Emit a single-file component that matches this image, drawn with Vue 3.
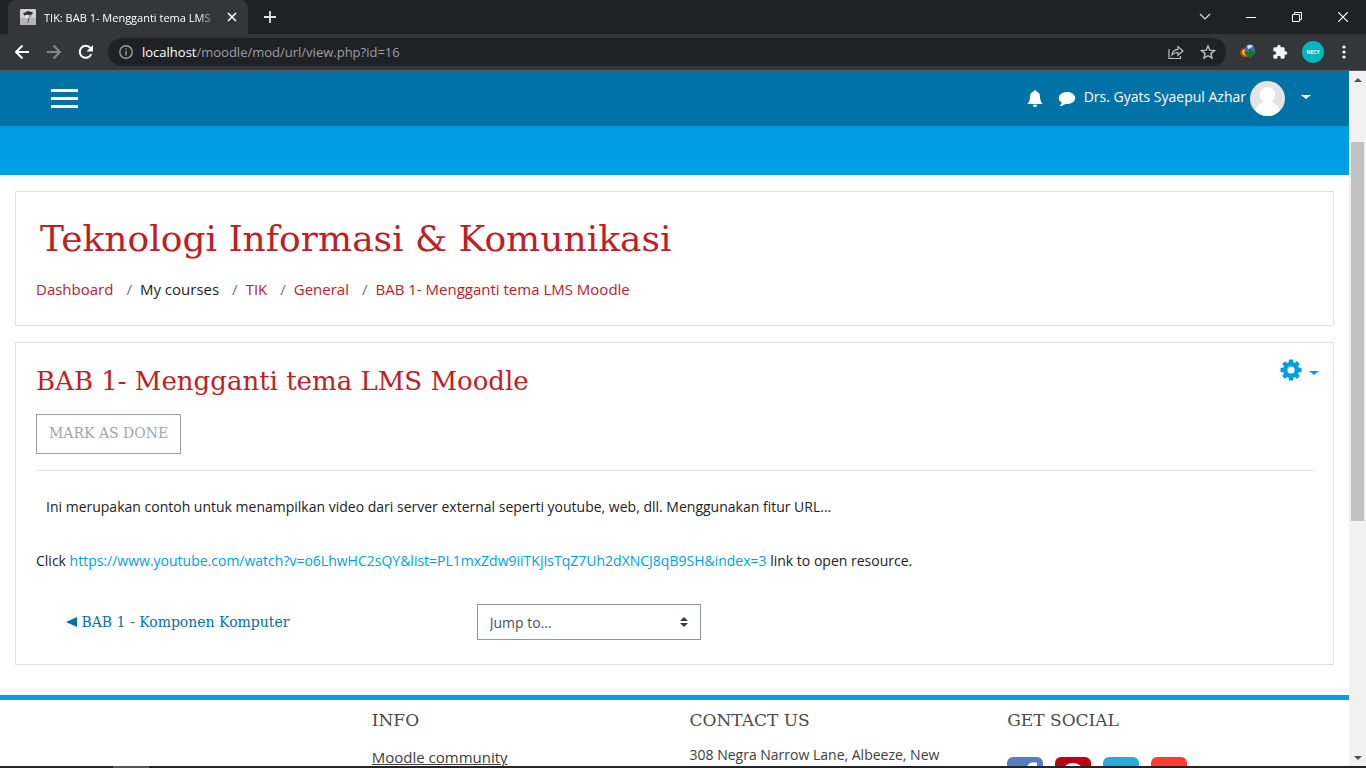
<template>
  <div class="window">
    <div class="tabstrip">
      <div class="tab">
        <svg class="tab__favicon" viewBox="0 0 16 16" aria-hidden="true">
          <rect width="16" height="16" rx="1" fill="#cfcfcf" />
          <rect y="9" width="16" height="7" fill="#b4b4b4" />
          <path d="M3 4.5 8 2l5 1.5-1 2-3 .5-2-.5-2 1.5z" fill="#303030" />
          <path d="M10 5.500c1 3-1 3-1.500 4.500L8 14" fill="none" stroke="#555" />
          <path d="M6 6c0 2 1 2 2 3" fill="none" stroke="#f4f4f4" stroke-width="1.500" />
        </svg>
        <span class="tab__title">TIK: BAB 1- Mengganti tema LMS</span>
        <button type="button" class="icon-btn tab__close" aria-label="Close tab">
          <svg width="10" height="10" viewBox="0 0 10 10"><path d="M1 1l8 8M9 1 1 9" stroke="#fff" stroke-width="1.6" /></svg>
        </button>
      </div>
      <button type="button" class="icon-btn tabstrip__new" aria-label="New tab">
        <svg width="12" height="12" viewBox="0 0 12 12"><path d="M6 0v12M0 6h12" stroke="#dfe1e5" stroke-width="1.8" /></svg>
      </button>
      <div class="caption">
        <button type="button" class="icon-btn caption__btn" aria-label="Search tabs">
          <svg width="12" height="12" viewBox="0 0 12 12"><path d="M1 3l5 5 5-5" fill="none" stroke="#dfe1e5" stroke-width="1.2" /></svg>
        </button>
        <button type="button" class="icon-btn caption__btn" aria-label="Minimize">
          <svg width="10" height="10" viewBox="0 0 10 10"><path d="M0 5.500h10" stroke="#fff" /></svg>
        </button>
        <button type="button" class="icon-btn caption__btn" aria-label="Restore">
          <svg width="10" height="10" viewBox="0 0 10 10" fill="none" stroke="#fff">
            <path d="M.5 2.500h7v7h-7zM2.500 2.500v-2h7v7h-2" />
          </svg>
        </button>
        <button type="button" class="icon-btn caption__btn" aria-label="Close">
          <svg width="10" height="10" viewBox="0 0 10 10"><path d="M0 0l10 10M10 0 0 10" stroke="#fff" stroke-width="1.200" /></svg>
        </button>
      </div>
    </div>

    <div class="toolbar">
      <button type="button" class="icon-btn toolbar__nav" aria-label="Back">
        <svg width="16" height="16" viewBox="0 0 16 16" fill="none" stroke="#fff" stroke-width="2"><path d="M15 8H2M8.500 1.500 2 8l6.500 6.500" /></svg>
      </button>
      <button type="button" class="icon-btn toolbar__nav" aria-label="Forward">
        <svg width="16" height="16" viewBox="0 0 16 16" fill="none" stroke="#84868a" stroke-width="2"><path d="M1 8h13M7.500 1.500 14 8l-6.500 6.500" /></svg>
      </button>
      <button type="button" class="icon-btn toolbar__nav" aria-label="Reload">
        <svg width="16" height="16" viewBox="0 0 16 16">
          <path d="M13.300 10.200A6 6 0 1 1 12.400 4" fill="none" stroke="#fff" stroke-width="2" />
          <path d="M15 1v6.500H8.500z" fill="#fff" />
        </svg>
      </button>
      <div class="omnibox">
        <svg class="omnibox__info" width="14" height="14" viewBox="0 0 14 14" fill="none" stroke="#9aa0a6" stroke-width="1.400">
          <circle cx="7" cy="7" r="6.200" /><path d="M7 6v4.500M7 3.300v1.500" />
        </svg>
        <span class="omnibox__url"><b>localhost</b>/moodle/mod/url/view.php?id=16</span>
        <button type="button" class="icon-btn" aria-label="Share">
          <svg width="16" height="16" viewBox="0 0 16 16" fill="none" stroke="#bdc1c6" stroke-width="1.200">
            <path d="M1 5v9.500h11.500V12M4 11c.3-4 2.500-5.500 6-5.700V2.500L15 7l-5 4.300V8.500C7 8.500 5.300 9.300 4 11z" />
          </svg>
        </button>
        <button type="button" class="icon-btn" aria-label="Bookmark this tab">
          <svg width="16" height="16" viewBox="0 0 16 16" fill="none" stroke="#bdc1c6" stroke-width="1.400">
            <path d="m8 2 1.800 4.200 4.600.4-3.500 3 1.100 4.500L8 11.700l-4 2.400 1.100-4.500-3.500-3 4.600-.4z" />
          </svg>
        </button>
      </div>
      <button type="button" class="icon-btn toolbar__ext" aria-label="Download manager">
        <svg width="18" height="16" viewBox="0 0 18 16">
          <circle cx="11" cy="6" r="5.200" fill="#3f6ea8" />
          <path d="M8 2c2-2 5-1 6 0l-2 2-3 1z" fill="#c9dcf5" />
          <path d="M6 4C2 4 0 8 2 11s6 3 8 1c-4 0-6-3-4-8z" fill="#db3327" />
          <path d="M6 5c-3 1-4 4-1 6l4 1C6 10 5 8 6 5z" fill="#f7d133" />
          <path d="M5 8h5V5l7 4-7 6v-3c-2 0-4-1-5-4z" fill="#127a18" />
        </svg>
      </button>
      <button type="button" class="icon-btn toolbar__ext" aria-label="Extensions">
        <svg width="16" height="16" viewBox="0 0 24 24" fill="#f1f3f4">
          <path d="M20.500 11H19V7c0-1.100-.9-2-2-2h-4V3.500a2.500 2.500 0 0 0-5 0V5H4c-1.100 0-2 .9-2 2v3.800h1.500a2.700 2.700 0 0 1 0 5.400H2V20c0 1.100.9 2 2 2h3.800v-1.500a2.700 2.700 0 0 1 5.400 0V22H17c1.100 0 2-.9 2-2v-4h1.500a2.500 2.500 0 0 0 0-5z" />
        </svg>
      </button>
      <button type="button" class="toolbar__profile" aria-label="Profile">
        <span>NECY</span>
      </button>
      <button type="button" class="icon-btn toolbar__menu" aria-label="Menu">
        <svg width="4" height="14" viewBox="0 0 4 14" fill="#fff"><circle cx="2" cy="2" r="1.600" /><circle cx="2" cy="7" r="1.600" /><circle cx="2" cy="12" r="1.600" /></svg>
      </button>
    </div>

    <div class="viewport">
      <div class="page">
        <header class="navbar">
          <button type="button" class="navbar__toggle" aria-label="Side panel">
            <i></i><i></i><i></i>
          </button>
          <div class="navbar__user">
            <button type="button" class="icon-btn" aria-label="Notifications">
              <svg width="16" height="18" viewBox="0 0 16 18" fill="#fff">
                <path d="M8 0c.7 0 1 .5 1 1.200 2.500.6 4 2.600 4 5.300 0 4 1 5.800 2.800 7.500H.2C2 12.300 3 10.500 3 6.500c0-2.700 1.500-4.700 4-5.300C7 .5 7.300 0 8 0zM5.800 14.800h4.400a2.200 2.200 0 0 1-4.400 0z" />
              </svg>
            </button>
            <button type="button" class="icon-btn navbar__messages" aria-label="Messages">
              <svg width="18" height="16" viewBox="0 0 18 16" fill="#fff">
                <path d="M9 1c4.600 0 8.200 2.600 8.200 6s-3.600 6-8.200 6l-1.700-.1c-1.600 1.300-3.400 2-5.800 2.100 1-.9 1.900-1.900 2.200-3.400C1.900 10.500.8 8.900.8 7 .8 3.600 4.400 1 9 1z" />
              </svg>
            </button>
            <a href="#" class="navbar__name">Drs. Gyats Syaepul Azhar</a>
            <svg class="navbar__avatar" width="35" height="35" viewBox="0 0 35 35" aria-hidden="true">
              <defs><clipPath id="avatar"><circle cx="17.500" cy="17.500" r="17.500" /></clipPath></defs>
              <g clip-path="url(#avatar)">
                <rect width="35" height="35" fill="#e4e4e4" />
                <ellipse cx="17.500" cy="14" rx="7.600" ry="8" fill="#fff" />
                <path d="M4 35c1-8 4-12 10-14h7c6 2 9 6 10 14z" fill="#fff" />
              </g>
            </svg>
            <button type="button" class="icon-btn navbar__caret" aria-label="User menu"><span class="caret"></span></button>
          </div>
        </header>
        <div class="banner"></div>

        <main class="content">
          <section class="card card--header">
            <h1>Teknologi Informasi &amp; Komunikasi</h1>
            <nav aria-label="Breadcrumb">
              <ol class="breadcrumb">
                <li v-for="item in breadcrumbs" :key="item.label">
                  <a v-if="item.link" href="#">{{ item.label }}</a>
                  <span v-else>{{ item.label }}</span>
                </li>
              </ol>
            </nav>
          </section>

          <section class="card card--activity">
            <div class="activity__head">
              <h2>BAB 1- Mengganti tema LMS Moodle</h2>
              <button type="button" class="icon-btn activity__settings" aria-label="Actions menu">
                <svg width="22" height="22" viewBox="-11 -11 22 22">
                  <g fill="#009fe5">
                    <circle r="8" />
                    <rect v-for="a in gearAngles" :key="a" x="-2.200" y="-10.500" width="4.400" height="5" rx="0.600" :transform="`rotate(${a})`" />
                  </g>
                  <circle r="3.600" fill="#fff" />
                </svg>
                <span class="caret"></span>
              </button>
            </div>
            <button type="button" class="done-btn">MARK AS DONE</button>
            <hr>
            <p class="activity__intro">Ini merupakan contoh untuk menampilkan video dari server external seperti youtube, web, dll. Menggunakan fitur URL...</p>
            <p class="activity__link">Click <a href="#">{{ resourceUrl }}</a> link to open resource.</p>
            <div class="activity__nav">
              <a href="#" class="activity__prev">
                <svg width="11" height="10" viewBox="0 0 11 10" aria-hidden="true"><path d="M0 5 11 0v10z" fill="#0072a6" /></svg>
                BAB 1 - Komponen Komputer
              </a>
              <div class="jump">
                <select v-model="jump" aria-label="Jump to...">
                  <option value="">Jump to...</option>
                </select>
                <svg class="jump__arrows" width="8" height="10" viewBox="0 0 8 10" fill="#343a40" aria-hidden="true"><path d="M0 4l4-4 4 4zM0 6l4 4 4-4z" /></svg>
              </div>
            </div>
          </section>
        </main>

        <footer class="footer">
          <div></div>
          <div>
            <h3>INFO</h3>
            <a href="#" class="footer__link">Moodle community</a>
          </div>
          <div>
            <h3>CONTACT US</h3>
            <p>308 Negra Narrow Lane, Albeeze, New</p>
          </div>
          <div>
            <h3>GET SOCIAL</h3>
            <div class="social">
              <a href="#" class="social__item social__item--facebook" aria-label="Facebook">
                <svg viewBox="0 0 36 36"><path d="M20 36V20h-4v-5h4v-3c0-4 2-6.500 6-6.500h4v5h-3c-2 0-2 1-2 2.500v2h5l-1 5h-4v16z" fill="#fff" /></svg>
              </a>
              <a href="#" class="social__item social__item--pinterest" aria-label="Pinterest">
                <svg viewBox="0 0 36 36"><circle cx="18" cy="18" r="12" fill="#fff" /><path d="M14 28l3-12m-3 3c-3-8 9-9 8-2-1 6-6 4-6 3" fill="none" stroke="#bd0014" stroke-width="2.500" /></svg>
              </a>
              <a href="#" class="social__item social__item--twitter" aria-label="Twitter">
                <svg viewBox="0 0 36 36"><path d="M8 26c8 4 18-1 18-12l3-3-4 1c-3-4-8-1-7 3-4 0-7-2-9-4-1 3 0 5 2 6l-2-1c0 3 2 4 4 5h-2c1 2 2 3 4 3-2 2-4 2-7 2z" fill="#fff" /></svg>
              </a>
              <a href="#" class="social__item social__item--google" aria-label="Google Plus">
                <svg viewBox="0 0 36 36"><path d="M20 14a6 6 0 1 0 1 5h-6M25 18h7M28.500 14.500v7" fill="none" stroke="#fff" stroke-width="2.500" /></svg>
              </a>
            </div>
          </div>
        </footer>
      </div>

      <div class="scrollbar" aria-hidden="true">
        <span class="scrollbar__arrow scrollbar__arrow--up"></span>
        <div class="scrollbar__track"><div class="scrollbar__thumb"></div></div>
        <span class="scrollbar__arrow scrollbar__arrow--down"></span>
      </div>
    </div>
    <div class="taskbar"><span></span></div>
  </div>
</template>

<script setup>
import { ref } from 'vue'

const breadcrumbs = [
  { label: 'Dashboard', link: true },
  { label: 'My courses', link: false },
  { label: 'TIK', link: true },
  { label: 'General', link: true },
  { label: 'BAB 1- Mengganti tema LMS Moodle', link: true },
]

const resourceUrl = 'https://www.youtube.com/watch?v=o6LhwHC2sQY&list=PL1mxZdw9iiTKjIsTqZ7Uh2dXNCJ8qB9SH&index=3'

const gearAngles = [0, 45, 90, 135, 180, 225, 270, 315]

const jump = ref('')
</script>

<style>
body {
  margin: 0;
}
</style>

<style scoped>
.window {
  display: flex;
  flex-direction: column;
  height: 100vh;
  overflow: hidden;
  background: #fff;
  color: #1d2125;
  font-family: "Open Sans", "Noto Sans", sans-serif;
  font-size: 14px;
}

a {
  text-decoration: none;
}

button,
select {
  font-family: inherit;
}

.icon-btn {
  display: inline-flex;
  align-items: center;
  justify-content: center;
  flex-shrink: 0;
  padding: 0;
  border: 0;
  background: none;
}

/* Browser chrome */
.tabstrip {
  display: flex;
  align-items: center;
  flex: none;
  height: 34px;
  background: #202124;
}

.tab {
  display: flex;
  align-items: center;
  box-sizing: border-box;
  width: 240px;
  height: 34px;
  margin-left: 8px;
  padding: 0 11px 0 12px;
  border-radius: 8px 8px 0 0;
  background: #35363a;
  color: #fff;
}

.tab__favicon {
  flex: none;
  width: 16px;
  height: 16px;
  margin-right: 8px;
}

.tab__title {
  flex: 1;
  overflow: hidden;
  white-space: nowrap;
  font-size: 11px;
  -webkit-mask-image: linear-gradient(90deg, #000 88%, transparent);
  mask-image: linear-gradient(90deg, #000 88%, transparent);
}

.tab__close {
  margin-left: 8px;
}

.tabstrip__new {
  margin-left: 16px;
}

.caption {
  display: flex;
  margin-left: auto;
}

.caption__btn {
  width: 46px;
  height: 28px;
}

.toolbar {
  display: flex;
  align-items: center;
  flex: none;
  height: 36px;
  padding: 0 20px 0 6px;
  border-bottom: 1px solid #55565a;
  background: #35363a;
}

.toolbar__nav {
  width: 32px;
}

.omnibox {
  display: flex;
  align-items: center;
  flex: 1;
  gap: 16px;
  height: 28px;
  margin: 0 12px 0 6px;
  padding: 0 10px 0 11px;
  border-radius: 14px;
  background: #202124;
}

.omnibox__info {
  margin-right: -7px;
}

.omnibox__url {
  flex: 1;
  color: #9aa0a6;
  font-size: 13px;
}

.omnibox__url b {
  color: #fff;
  font-weight: 400;
}

.toolbar__ext {
  width: 20px;
  margin-right: 12px;
}

.toolbar__profile {
  width: 22px;
  height: 22px;
  margin-right: 18px;
  padding: 0;
  overflow: hidden;
  border: 0;
  border-radius: 50%;
  background: #00b4c0;
  color: #fff;
  font-size: 5px;
  font-weight: 700;
  line-height: 18px;
}

.viewport {
  display: flex;
  flex: 1;
  min-height: 0;
}

.page {
  flex: 1;
  min-width: 0;
  overflow: hidden;
}

.scrollbar {
  display: flex;
  flex-direction: column;
  align-items: center;
  width: 17px;
  background: #f1f1f1;
}

.scrollbar__arrow {
  margin: 7px 0 6px;
  border: 4px solid transparent;
  border-top-width: 0;
  border-bottom: 4px solid #505050;
}

.scrollbar__arrow--down {
  border-top: 4px solid #505050;
  border-bottom-width: 0;
}

.scrollbar__track {
  flex: 1;
  width: 13px;
  padding-top: 54px;
}

.scrollbar__thumb {
  height: 62.5%;
  background: #c1c1c1;
}

.taskbar {
  flex: none;
  height: 2px;
  background: #242428;
}

.taskbar span {
  display: block;
  width: 36px;
  height: 2px;
  margin-left: 113px;
  background: #57575a;
}

/* Moodle page */
.navbar {
  display: flex;
  align-items: center;
  justify-content: space-between;
  height: 55px;
  padding: 0 38px 0 51px;
  background: #0072a6;
}

.navbar__toggle {
  display: flex;
  flex-direction: column;
  gap: 5px;
  width: 27px;
  padding: 0;
  border: 0;
  background: none;
}

.navbar__toggle i {
  width: 100%;
  height: 3px;
  background: #fff;
}

.navbar__user {
  display: flex;
  align-items: center;
}

.navbar__messages {
  margin: 0 8px 0 15px;
}

.navbar__name {
  padding-bottom: 4px;
  color: #fff;
}

.navbar__avatar {
  margin-left: 4px;
}

.navbar__caret {
  margin: 0 0 4px 16px;
  color: #fff;
}

.caret {
  border: 5px solid transparent;
  border-top: 4px solid currentColor;
  border-bottom-width: 0;
}

.banner {
  height: 49px;
  background: linear-gradient(#0095d8, #009fe5 4px);
}

.content {
  padding: 16px 15px 30px;
}

.card {
  border: 1px solid #dee2e6;
  background: #fff;
}

.card--header {
  margin-bottom: 16px;
  padding: 23px 20px 24px;
}

h1,
h2,
h3 {
  margin: 0;
  font-family: "DejaVu Serif", serif;
  font-weight: 400;
}

h1 {
  padding-left: 4px;
  color: #be2026;
  font-size: 36px;
  line-height: 48px;
}

.breadcrumb {
  display: flex;
  margin: 14px 0 0;
  padding: 0;
  list-style: none;
  font-size: 15px;
  line-height: 24px;
}

.breadcrumb li + li::before {
  content: "/";
  padding: 0 8px 0 13px;
  color: #6a737b;
}

.breadcrumb a {
  color: #be2026;
}

.card--activity {
  padding: 16px 20px 24px;
}

.activity__head {
  display: flex;
  justify-content: space-between;
}

h2 {
  color: #be2026;
  font-size: 26px;
  line-height: 44px;
}

.activity__settings {
  align-self: flex-start;
  gap: 7px;
  margin-right: -6px;
  color: #009fe5;
}

.activity__settings .caret {
  margin-top: 5px;
}

.done-btn {
  height: 40px;
  margin-top: 11px;
  padding: 0 12px 3px;
  border: 1px solid #9a9fa6;
  background: #fff;
  color: #9fa4aa;
  font-family: "DejaVu Serif", serif;
  font-size: 14px;
}

hr {
  margin: 16px 0 24px;
  border: 0;
  border-top: 1px solid #dee2e6;
}

p {
  margin: 0;
  line-height: 24px;
}

.activity__intro {
  padding-left: 10px;
}

.activity__link {
  margin-top: 30px;
}

.activity__link a {
  color: #009fe5;
}

.activity__nav {
  display: grid;
  grid-template-columns: 1fr 2fr;
  align-items: center;
  margin-top: 31px;
  padding: 0 15px 0 30px;
}

.activity__prev {
  color: #0072a6;
  font-family: "DejaVu Serif", serif;
}

.jump {
  position: relative;
  width: 224px;
}

.jump select {
  display: block;
  width: 100%;
  height: 36px;
  padding: 0 28px 0 12px;
  border: 1px solid #8f959e;
  border-radius: 0;
  appearance: none;
  background: #fff;
  color: #495057;
  font-size: 14px;
}

.jump__arrows {
  position: absolute;
  top: 13px;
  right: 13px;
  pointer-events: none;
}

.footer {
  display: grid;
  grid-template-columns: repeat(4, 1fr);
  padding: 0 39px;
  border-top: 5px solid #009fe5;
  color: #3d3d3d;
}

.footer > div {
  padding: 8px 15px 0;
}

h3 {
  margin-bottom: 10px;
  color: #4a4a4a;
  font-size: 17px;
  line-height: 25px;
}

.footer__link {
  display: inline-block;
  margin-top: 2px;
  color: #3d3d3d;
  font-size: 15px;
  line-height: 24px;
  text-decoration: underline;
}

.social {
  display: flex;
  gap: 12px;
  margin-top: 24px;
}

.social__item {
  width: 36px;
  height: 36px;
  border-radius: 6px;
}

.social__item--facebook { background: #597ac7; }
.social__item--pinterest { background: #bd0014; }
.social__item--twitter { background: #29a9e1; }
.social__item--google { background: #f93f2d; }
</style>
